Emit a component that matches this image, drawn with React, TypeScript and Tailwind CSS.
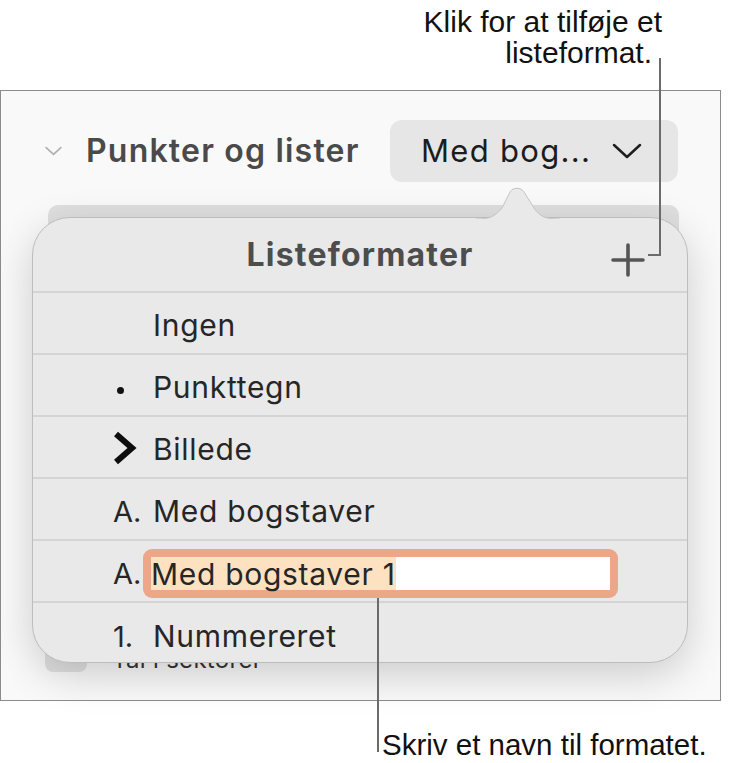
import React from 'react';

const uiFont = { fontFamily: 'Inter, "Noto Sans", sans-serif' };
const noteFont = { fontFamily: '"Liberation Sans", Arial, sans-serif' };

// Small disclosure chevron used in the header and the popup button
const Chevron: React.FC<{ className?: string; stroke?: string; width?: number }> = ({ className, stroke = '#1f1f1f', width = 2.5 }) => (
    <svg viewBox="0 0 30 16" className={className} fill="none">
        <path d="M2 2 L15 14 L28 2" stroke={stroke} strokeWidth={width} strokeLinecap="round" strokeLinejoin="round" />
    </svg>
);

interface ListRowProps {
    marker?: React.ReactNode;
    label: string;
    editing?: boolean;
    last?: boolean;
}

const ListRow: React.FC<ListRowProps> = ({ marker, label, editing, last }) => (
    <div className={`flex h-[62px] items-center ${last ? '' : 'border-b-2 border-[#d4d4d4]'}`}>
        <div className="w-[120px] flex justify-start pl-[80px] pt-[5px] text-[29px] text-[#262626]">{marker}</div>
        {editing ? (
            <div className="ml-[-10px] mt-[5px] w-[475px] h-[49px] rounded-[9px] bg-[#eda687] p-[8px]">
                <div className="h-full bg-white flex items-center">
                    <span className="bg-[#fde1c0] h-full flex items-center text-[30px] tracking-[0.7px] text-[#262626] leading-none">{label}</span>
                </div>
            </div>
        ) : (
            <span className="pt-[5px] text-[30px] tracking-[0.7px] text-[#262626]">{label}</span>
        )}
    </div>
);

export default function App() {
    return (
        <div className="relative w-[729px] h-[763px] bg-white overflow-hidden" style={uiFont}>
            {/* callout above the panel */}
            <div className="h-[90px] flex flex-col items-end pr-[67px] pt-[6px] text-[30px] leading-[31px] text-[#111]" style={noteFont}>
                <span>Klik for at tilføje et</span>
                <span className="pr-[10px]">listeformat.</span>
            </div>

            {/* inspector panel */}
            <div className="w-[721px] h-[611px] border border-[#8c8c8c] bg-[#f9f9f9] flex flex-col">
                <div className="flex items-center h-[62px] mt-[29px]">
                    <Chevron className="w-[17px] h-[10px] ml-[44px]" stroke="#b0b0b0" width={3} />
                    <span className="ml-[24px] text-[32px] font-semibold tracking-[1.2px] text-[#4a4a4a]">Punkter og lister</span>
                    <div className="ml-auto mr-[42px] w-[288px] h-[62px] rounded-[12px] bg-[#e6e6e6] flex items-center pl-[31px] pr-[36px]">
                        <span className="text-[31px] tracking-[1.3px] text-[#1c1c1c]">Med bog...</span>
                        <Chevron className="ml-auto w-[30px] h-[16px]" />
                    </div>
                </div>

                {/* controls underneath the popup */}
                <div className="mt-[23px] ml-[47px] w-[631px] h-[60px] rounded-[10px] bg-[#dfdfdf]" />
                <div className="mt-[367px] ml-[44px] flex items-end">
                    <div className="w-[42px] h-[40px] rounded-[8px] bg-[#e0e0e0]" />
                    <span className="ml-[25px] mb-[0px] text-[24px] leading-none tracking-[0.3px] text-[#333]">Tal i sektorer</span>
                </div>
            </div>

            {/* popover */}
            <div className="absolute left-[32px] top-[217px] w-[656px] h-[446px] rounded-[38px] border border-[#bdbdbd] bg-[#e9e9e9] shadow-[0_12px_40px_rgba(0,0,0,0.18)]">
                <svg className="absolute left-[443px] top-[-32px]" width="84" height="34" viewBox="0 0 84 34">
                    <path d="M0 33 C14 33 18 31 26 22 L34 6 C37 1 45 1 48 6 L58 22 C64 31 70 33 84 33" fill="#e9e9e9" stroke="#c4c4c4" strokeWidth="1" />
                    <rect x="0" y="33" width="84" height="2" fill="#e9e9e9" />
                </svg>
                <div className="relative flex h-[75px] items-center justify-center border-b-2 border-[#d4d4d4]">
                    <span className="text-[32px] font-bold tracking-[1.2px] text-[#4d4d4d]">Listeformater</span>
                    <svg className="absolute right-[42px] top-[25px]" width="34" height="34" viewBox="0 0 34 34">
                        <path d="M17 2 V32 M2 17 H32" stroke="#555" strokeWidth="3.6" strokeLinecap="round" />
                    </svg>
                </div>
                <ListRow label="Ingen" />
                <ListRow label="Punkttegn" marker={<span className="mt-[6px] ml-[4px] w-[7px] h-[7px] rounded-full bg-[#111] inline-block" />} />
                <ListRow
                    label="Billede"
                    marker={
                        <svg width="26" height="34" viewBox="0 0 26 34" className="ml-[-1px] mt-[-3px]">
                            <path d="M4 3 L20 17 L4 31" stroke="#0d0d0d" strokeWidth="6" fill="none" strokeLinejoin="miter" />
                        </svg>
                    }
                />
                <ListRow label="Med bogstaver" marker="A." />
                <ListRow label="Med bogstaver 1" marker="A." editing />
                <ListRow label="Nummereret" marker="1." last />
            </div>

            {/* leader lines */}
            <div className="absolute left-[659px] top-[58px] w-[2px] h-[198px] bg-[#6b6b6b]" />
            <div className="absolute left-[648px] top-[254px] w-[13px] h-[2px] bg-[#6b6b6b]" />
            <div className="absolute left-[377px] top-[598px] w-[2px] h-[154px] bg-[#6b6b6b]" />

            {/* callout below the panel */}
            <div className="absolute left-[382px] top-[729px] text-[29.5px] leading-[31px] text-[#111]" style={noteFont}>
                Skriv et navn til formatet.
            </div>
        </div>
    );
}
